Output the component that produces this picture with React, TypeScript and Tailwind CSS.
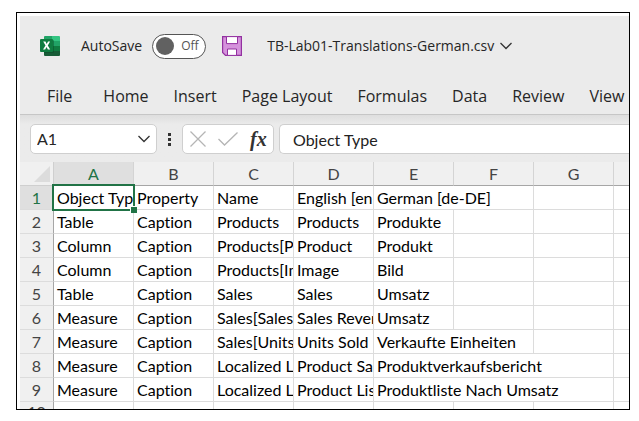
import React, { useState } from "react";

type Cell = { text: string; span?: number };

const tabs = ["File", "Home", "Insert", "Page Layout", "Formulas", "Data", "Review", "View"];
const columns = ["A", "B", "C", "D", "E", "F", "G"];

const rows: Cell[][] = [
  [{ text: "Object Type" }, { text: "Property" }, { text: "Name" }, { text: "English [en-US]" }, { text: "German [de-DE]", span: 2 }],
  [{ text: "Table" }, { text: "Caption" }, { text: "Products" }, { text: "Products" }, { text: "Produkte" }],
  [{ text: "Column" }, { text: "Caption" }, { text: "Products[Product]" }, { text: "Product" }, { text: "Produkt" }],
  [{ text: "Column" }, { text: "Caption" }, { text: "Products[Image]" }, { text: "Image" }, { text: "Bild" }],
  [{ text: "Table" }, { text: "Caption" }, { text: "Sales" }, { text: "Sales" }, { text: "Umsatz" }],
  [{ text: "Measure" }, { text: "Caption" }, { text: "Sales[Sales Revenue]" }, { text: "Sales Revenue" }, { text: "Umsatz" }],
  [{ text: "Measure" }, { text: "Caption" }, { text: "Sales[Units Sold]" }, { text: "Units Sold" }, { text: "Verkaufte Einheiten", span: 2 }],
  [{ text: "Measure" }, { text: "Caption" }, { text: "Localized Labels" }, { text: "Product Sales Report" }, { text: "Produktverkaufsbericht", span: 3 }],
  [{ text: "Measure" }, { text: "Caption" }, { text: "Localized Labels" }, { text: "Product List By Sales" }, { text: "Produktliste Nach Umsatz", span: 3 }],
];

function ExcelLogo() {
  return (
    <svg viewBox="0 0 20 20" className="size-5 shrink-0" aria-hidden="true">
      <path d="M5 0h8v5H4V1a1 1 0 0 1 1-1z" fill="#21a366" />
      <path d="M12 0h7a1 1 0 0 1 1 1v4h-8z" fill="#33c481" />
      <path d="M4 5h8v5H4z" fill="#107c41" />
      <path d="M12 5h8v5h-8z" fill="#21a366" />
      <path d="M4 10h8v5H4z" fill="#185c37" />
      <path d="M12 10h8v5h-8z" fill="#107c41" />
      <path d="M4 15h16v4a1 1 0 0 1-1 1H5a1 1 0 0 1-1-1z" fill="#185c37" />
      <path d="M4 4h9a1 1 0 0 1 1 1v11a1 1 0 0 1-1 1H4z" fill="#0b4a28" opacity="0.45" />
      <rect y="3" width="13" height="13" rx="1" fill="#107c41" />
      <path d="M3.2 5.5h2.3l1.2 2.4L8 5.5h2.1L7.8 9.5l2.4 4H7.9l-1.4-2.6-1.3 2.6H3l2.5-4z" fill="#fff" />
    </svg>
  );
}

function SaveIcon() {
  return (
    <svg viewBox="0 0 20 20" className="size-5" aria-hidden="true">
      <path d="M.6.6h18.8v18.8H3.5L.6 16.5z" fill="#d592dc" stroke="#9331a0" strokeWidth="1.2" />
      <path d="M4.5.6h11v7h-11z" fill="#fff" stroke="#9331a0" strokeWidth="1" />
      <path d="M5.5 19.4v-6.4h9v6.4z" fill="#fff" stroke="#9331a0" strokeWidth="1" />
    </svg>
  );
}

function Chevron() {
  return (
    <svg viewBox="0 0 12 8" className="h-2 w-3" fill="none" stroke="#333" strokeWidth="1.3" aria-hidden="true">
      <path d="M.5 1 6 6.5 11.5 1" />
    </svg>
  );
}

export default function App() {
  const [autoSave, setAutoSave] = useState(false);
  const [name, setName] = useState("A1");
  const [formula, setFormula] = useState("Object Type");

  return (
    <div className="bg-white pt-3 pr-[9px] pb-3 pl-4 font-['Open_Sans','Noto_Sans',sans-serif] text-[#262626]">
      <main className="overflow-hidden border border-black pt-[3px] pl-[3px]">
        <header className="overflow-hidden border-b border-[#c6c6c6] bg-[#ebebeb]">
          <div className="flex h-15 items-center pl-5 text-sm whitespace-nowrap">
            <ExcelLogo />
            <label className="ml-[21px] flex items-center gap-2.5">
              AutoSave
              <input
                type="checkbox"
                role="switch"
                checked={autoSave}
                onChange={(e) => setAutoSave(e.target.checked)}
                className="peer sr-only"
              />
              <span className="flex h-[25px] w-[54px] items-center gap-[7px] rounded-full border border-[#555] bg-white pl-[3px] text-xs text-[#555] peer-focus-visible:outline-2">
                <span className="size-[18px] rounded-full bg-[#616161]" />
                {autoSave ? "On" : "Off"}
              </span>
            </label>
            <button type="button" aria-label="Save" className="ml-4">
              <SaveIcon />
            </button>
            <button type="button" className="ml-[25px] flex items-center gap-1.5">
              TB-Lab01-Translations-German.csv
              <Chevron />
            </button>
          </div>
          <nav className="flex h-[38px] items-center gap-[25px] pt-0.5 pl-[27px] text-base whitespace-nowrap">
            {tabs.map((tab) => (
              <button type="button" key={tab} className="leading-6 first:mr-1.5">
                {tab}
              </button>
            ))}
          </nav>
        </header>

        <div className="flex items-center overflow-hidden bg-linear-to-b from-[#dedede] via-[#ebebeb] via-20% to-[#ebebeb] pt-[9px] pb-2 pl-2.5">
          <div className="flex h-[30px] w-[127px] shrink-0 items-center rounded-[5px] border border-[#cfcfcf] bg-white pr-1.5 pl-1.5">
            <input
              aria-label="Name box"
              value={name}
              onChange={(e) => setName(e.target.value)}
              className="min-w-0 flex-1 bg-transparent font-[Lato,sans-serif] text-base outline-none"
            />
            <button type="button" aria-label="Open name list">
              <Chevron />
            </button>
          </div>
          <svg viewBox="0 0 3 13" className="mx-[11px] h-[13px] w-[3px] shrink-0" fill="#333" aria-hidden="true">
            <path d="M0 0h3v3H0zM0 5h3v3H0zM0 10h3v3H0z" />
          </svg>
          <div className="flex h-[30px] w-[92px] shrink-0 items-center gap-3 rounded-[5px] border border-[#cfcfcf] bg-white pl-[7px]">
            <button type="button" aria-label="Cancel">
              <svg viewBox="0 0 16 16" className="size-4" stroke="#b5b5b5" strokeWidth="1.3" aria-hidden="true">
                <path d="m.5.5 15 15m0-15-15 15" />
              </svg>
            </button>
            <button type="button" aria-label="Enter">
              <svg viewBox="0 0 20 14" className="h-3.5 w-5" fill="none" stroke="#b5b5b5" strokeWidth="1.3" aria-hidden="true">
                <path d="m.5 7 6 6L19.5.5" />
              </svg>
            </button>
            <button
              type="button"
              aria-label="Insert function"
              className="font-['Liberation_Serif',serif] text-xl leading-6 font-bold text-[#333] italic"
            >
              fx
            </button>
          </div>
          <input
            aria-label="Formula bar"
            value={formula}
            onChange={(e) => setFormula(e.target.value)}
            className="ml-[5px] h-[30px] min-w-0 flex-1 rounded-l-[5px] border border-r-0 border-[#cfcfcf] bg-white pl-[13px] font-[Lato,sans-serif] text-base text-[#222] outline-none"
          />
        </div>

        <table className="w-full table-fixed border-separate border-spacing-0 font-[Lato,sans-serif] text-base leading-[23px] text-black [font-variant-ligatures:none]">
          <colgroup>
            <col className="w-[34px]" />
            {columns.map((c) => (
              <col key={c} className="w-20" />
            ))}
            <col />
          </colgroup>
          <thead>
            <tr className="bg-[#f0f0f0] text-[#444]">
              <th className="h-6 border-r border-b border-r-[#cfcfcf] border-b-[#cfcfcf] p-0">
                <svg viewBox="0 0 16 16" className="mr-[3px] ml-auto size-4" aria-hidden="true">
                  <path d="M16 0v16H0z" fill="#dcdcdc" />
                </svg>
              </th>
              {columns.map((c) => (
                <th
                  key={c}
                  scope="col"
                  className="h-6 border-r border-b border-r-[#d4d4d4] border-b-[#a6a6a6] p-0 font-normal nth-2:bg-[#dfdfdf] nth-2:text-[#217346]"
                >
                  {c}
                </th>
              ))}
              <th className="h-6 border-b border-[#a6a6a6] p-0" />
            </tr>
          </thead>
          <tbody>
            {rows.map((cells, r) => {
              const used = cells.reduce((n, c) => n + (c.span ?? 1), 0);
              return (
                <tr key={r} className="group">
                  <th
                    scope="row"
                    className="h-6 border-r border-b border-r-[#a6a6a6] border-b-[#dcdcdc] bg-[#f0f0f0] p-0 font-normal text-[#444] group-first:bg-[#dfdfdf] group-first:text-[#217346]"
                  >
                    {r + 1}
                  </th>
                  {cells.map((cell, i) => {
                    const active = r === 0 && i === 0;
                    return (
                      <td
                        key={i}
                        colSpan={cell.span}
                        className={`h-6 border-r border-b border-[#dcdcdc] p-0 ${active ? "relative z-10" : ""}`}
                      >
                        <div className="overflow-hidden pl-[3px] whitespace-nowrap">{cell.text}</div>
                        {active && (
                          <span className="pointer-events-none absolute -inset-0.5 border-2 border-[#217346]">
                            <span className="absolute -right-1 -bottom-1 size-[7px] border-t border-l border-white bg-[#217346]" />
                          </span>
                        )}
                      </td>
                    );
                  })}
                  {columns.slice(used).map((c) => (
                    <td key={c} className="border-r border-b border-[#dcdcdc] p-0" />
                  ))}
                  <td className="border-b border-[#dcdcdc] p-0" />
                </tr>
              );
            })}
            <tr>
              <th scope="row" className="border-r border-[#a6a6a6] bg-[#f0f0f0] p-0 font-normal text-[#444]">
                <div className="h-[7px] overflow-hidden leading-5">10</div>
              </th>
              {columns.map((c) => (
                <td key={c} className="border-r border-[#dcdcdc] p-0" />
              ))}
              <td className="p-0" />
            </tr>
          </tbody>
        </table>
      </main>
    </div>
  );
}
